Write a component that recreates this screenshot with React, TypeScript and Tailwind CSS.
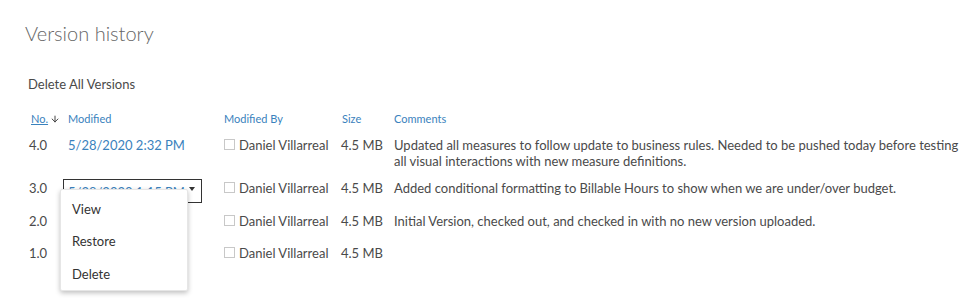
import { ArrowDown } from 'lucide-react';

const FONT = { fontFamily: '"Segoe UI", Lato, "Noto Sans", sans-serif' };

type Row = {
  no: string;
  modified: string;
  comment: string[];
  top: string;
  height: string;
  active?: boolean;
};

// rows 2.0 and 1.0 sit under the open menu, so their dates are not shown
const ROWS: Row[] = [
  {
    no: '4.0',
    modified: '5/28/2020 2:32 PM',
    comment: [
      'Updated all measures to follow update to business rules. Needed to be pushed today before testing',
      'all visual interactions with new measure definitions.',
    ],
    top: 'mt-[10px]',
    height: 'h-[32px]',
  },
  {
    no: '3.0',
    modified: '5/28/2020 1:15 PM',
    comment: ['Added conditional formatting to Billable Hours to show when we are under/over budget.'],
    top: 'mt-[11px]',
    height: 'h-[16px]',
    active: true,
  },
  {
    no: '2.0',
    modified: '',
    comment: ['Initial Version, checked out, and checked in with no new version uploaded.'],
    top: 'mt-[17px]',
    height: 'h-[16px]',
  },
  {
    no: '1.0',
    modified: '',
    comment: [],
    top: 'mt-[16px]',
    height: 'h-[16px]',
  },
];

function Checkbox() {
  return <span className="mt-[2px] mr-[4px] inline-block h-[11px] w-[11px] shrink-0 border border-[#c8c8c8] bg-white" />;
}

export default function App() {
  return (
    <div className="relative h-[302px] w-[979px] overflow-hidden bg-white text-[#4a4a4a]" style={FONT}>
      <div className="pl-[25px] pt-[19px]">
        <h1 className="text-[20px] leading-[28px] font-light text-[#666]">Version history</h1>
        <p className="mt-[28px] pl-[3px] text-[13px] leading-[18px]">Delete All Versions</p>
      </div>

      <div className="mt-[18px] pl-[29px] text-[13px] leading-[16px]">
        <div className="flex h-[16px] items-center text-[11px] text-[#3a82bd]">
          <div className="flex w-[39px] items-center pl-[2px]">
            <span className="underline decoration-[#3a82bd]">No.</span>
            <ArrowDown className="ml-[2px] h-[10px] w-[10px] text-[#333]" strokeWidth={2.2} />
          </div>
          <div className="w-[156px]">Modified</div>
          <div className="w-[117px]">Modified By</div>
          <div className="w-[53px] pl-[1px]">Size</div>
          <div>Comments</div>
        </div>

        {ROWS.map((row) => (
          <div key={row.no} className={`flex items-start ${row.top} ${row.height}`}>
            <div className="w-[39px]">{row.no}</div>
            <div className="w-[156px]">
              {row.active ? (
                <div className="relative -mt-[1px] -ml-[5px] h-[24px] w-[139px] border border-[#333] pt-[4px] pl-[4px] text-[#3a82bd]">
                  {row.modified}
                  <span className="absolute top-[7px] right-[6px] h-0 w-0 border-x-[3px] border-t-[4px] border-x-transparent border-t-[#333]" />
                </div>
              ) : (
                <span className="text-[#3a82bd]">{row.modified}</span>
              )}
            </div>
            <div className="flex w-[117px] items-start">
              <Checkbox />
              <span className="whitespace-nowrap">Daniel Villarreal</span>
            </div>
            <div className="w-[53px] whitespace-nowrap">4.5 MB</div>
            <div className="w-[580px]">
              {row.comment.map((line) => (
                <div key={line} className="whitespace-nowrap">
                  {line}
                </div>
              ))}
            </div>
          </div>
        ))}
      </div>

      <div className="absolute top-[189px] left-[60px] flex h-[102px] w-[128px] flex-col rounded-[2px] border border-[#e6e6e6] bg-white pt-[11px] text-[13px] leading-[16px] text-[#333] shadow-[0_2px_5px_rgba(0,0,0,0.25)]">
        <div className="pl-[11px]">View</div>
        <div className="mt-[16px] pl-[11px]">Restore</div>
        <div className="mt-[17px] pl-[11px]">Delete</div>
      </div>
    </div>
  );
}
